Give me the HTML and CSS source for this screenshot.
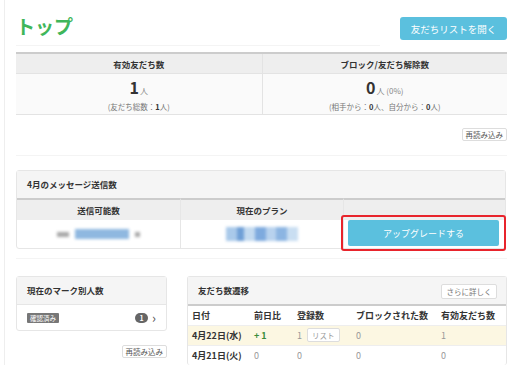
FILE: index.html
```html
<!DOCTYPE html>
<html lang="ja">
<head>
  <meta charset="UTF-8" />
  <title>トップ</title>
  <link rel="stylesheet" href="styles.css">
</head>
<body>
  <div class="page">
    <div class="title-row">
      <h1>トップ</h1>
      <button class="btn-info">友だちリストを開く</button>
    </div>

    <div class="stats">
      <div class="stat">
        <div class="stat-head">有効友だち数</div>
        <div class="stat-body">
          <div class="big"><b>1</b><span class="unit">人</span></div>
          <div class="sub">(友だち総数：<b>1</b>人)</div>
        </div>
      </div>
      <div class="stat">
        <div class="stat-head">ブロック/友だち解除数</div>
        <div class="stat-body">
          <div class="big"><b>0</b><span class="unit">人 (0%)</span></div>
          <div class="sub">(相手から：<b>0</b>人、自分から：<b>0</b>人)</div>
        </div>
      </div>
    </div>

    <div class="reload-row">
      <button class="btn-small">再読み込み</button>
    </div>

    <div class="card msg-card">
      <div class="card-head">4月のメッセージ送信数</div>
      <div class="msg-grid">
        <div class="msg-th">送信可能数</div>
        <div class="msg-th">現在のプラン</div>
        <div class="msg-th"></div>
        <div class="msg-td">
          <span class="blur gray" style="width:12px"></span>
          <span class="blur blue" style="width:54px"></span>
          <span class="blur gray" style="width:5px"></span>
        </div>
        <div class="msg-td">
          <span class="blur blue mosaic" style="width:72px"></span>
        </div>
        <div class="msg-td upgrade-cell">
          <div class="highlight">
            <button class="btn-upgrade">アップグレードする</button>
          </div>
        </div>
      </div>
    </div>
    <div class="divider"></div>

    <div class="bottom">
      <div class="left-col">
        <div class="card">
          <div class="card-head">現在のマーク別人数</div>
          <div class="mark-row">
            <span class="label">確認済み</span>
            <span class="count"><span class="badge">1</span><span class="chev">&rsaquo;</span></span>
          </div>
        </div>
        <div class="reload-row">
          <button class="btn-small">再読み込み</button>
        </div>
      </div>

      <div class="card friends">
        <div class="card-head">
          友だち数遷移
          <button class="btn-small more">さらに詳しく</button>
        </div>
        <table>
          <thead>
            <tr><th>日付</th><th>前日比</th><th>登録数</th><th>ブロックされた数</th><th>有効友だち数</th></tr>
          </thead>
          <tbody>
            <tr class="today">
              <td class="date">4月22日(水)</td>
              <td class="plus">+ 1</td>
              <td>1 <button class="btn-small list">リスト</button></td>
              <td>0</td>
              <td>1</td>
            </tr>
            <tr>
              <td class="date">4月21日(火)</td>
              <td>0</td>
              <td>0</td>
              <td>0</td>
              <td>0</td>
            </tr>
          </tbody>
        </table>
      </div>
    </div>
  </div>
</body>
</html>
```

FILE: styles.css
```css
* {
  box-sizing: border-box;
  margin: 0;
  padding: 0;
}

body {
  background: #ffffff;
  font-family: "Noto Sans CJK JP", "Noto Sans", sans-serif;
  color: #333333;
  font-size: 9px;
  overflow: hidden;
}

.page {
  margin-left: 4px;
  border-left: 1px solid #eeeeee;
  padding: 14px 3px 0 11px;
  min-height: 365px;
}

button {
  font-family: inherit;
  cursor: pointer;
}

.title-row {
  display: flex;
  justify-content: space-between;
  align-items: flex-start;
  height: 32px;
  border-bottom: 1px solid #f4f4f4;
  margin-right: 127px;
  margin-bottom: 6px;
  position: relative;
}

h1 {
  color: #3fb65a;
  font-size: 19px;
  line-height: 24px;
  font-weight: 700;
}

.btn-info {
  position: absolute;
  right: -127px;
  top: 3px;
  width: 107px;
  height: 23px;
  background: #5bc0de;
  color: #ffffff;
  border: none;
  border-radius: 3px;
  font-size: 9.5px;
}

.stats {
  display: grid;
  grid-template-columns: 1fr 1fr;
  border-top: 2px solid #cccccc;
  border-bottom: 1px solid #e3e3e3;
}

.stat + .stat {
  border-left: 1px solid #e3e3e3;
}

.stat-head {
  background: #eeeeee;
  height: 20px;
  line-height: 20px;
  text-align: center;
  font-weight: 700;
  font-size: 8.5px;
  border-bottom: 1px solid #e3e3e3;
}

.stat-body {
  background: #fafafa;
  height: 40px;
  text-align: center;
  padding-top: 5px;
}

.big {
  line-height: 17px;
}

.big b {
  font-size: 16px;
}

.unit {
  font-size: 8px;
  color: #888888;
  margin-left: 1px;
}

.sub {
  font-size: 7.5px;
  color: #777777;
  margin-top: 2px;
}

.sub b {
  color: #333333;
}

.reload-row {
  display: flex;
  justify-content: flex-end;
  padding: 13px 0 14px;
  border-bottom: 1px solid #f4f4f4;
  margin-bottom: 14px;
}

.btn-small {
  background: #ffffff;
  border: 1px solid #dddddd;
  border-radius: 2px;
  font-size: 7.5px;
  color: #555555;
  height: 13px;
  padding: 0 3px;
  line-height: 11px;
}

.card {
  border: 1px solid #e6e6e6;
  border-radius: 3px;
  background: #ffffff;
}

.card-head {
  background: #f5f5f5;
  height: 27px;
  line-height: 27px;
  padding-left: 10px;
  font-weight: 700;
  font-size: 8.5px;
  position: relative;
}

.msg-card {
  margin-right: 1px;
}

.msg-grid {
  display: grid;
  grid-template-columns: 163px 163px 1fr;
}

.msg-th {
  background: #eeeeee;
  border-top: 2px solid #cccccc;
  height: 22px;
  line-height: 20px;
  text-align: center;
  font-weight: 700;
  font-size: 8.5px;
}

.msg-td {
  height: 28px;
  display: flex;
  justify-content: center;
  align-items: center;
  gap: 6px;
}

.msg-th + .msg-th,
.msg-td + .msg-td {
  border-left: 1px solid #e6e6e6;
}

.msg-th:nth-child(4) {
  border-left: none;
}

.blur {
  display: inline-block;
  height: 10px;
  filter: blur(1.5px);
}

.blur.gray {
  background: #a8a8a8;
  height: 5px;
}

.blur.blue {
  background: #8fb8e0;
}

.blur.mosaic {
  height: 14px;
  background: linear-gradient(90deg, #a9c9ea 0 15%, #6f9fd6 15% 25%, #c3daf0 25% 40%, #7eaade 40% 55%, #b8d2ee 55% 70%, #8cb5e2 70% 85%, #c9def2 85%);
}

.upgrade-cell {
  position: relative;
  overflow: visible;
}

.highlight {
  position: absolute;
  left: -3px;
  right: -1px;
  top: -5px;
  bottom: -3px;
  border: 2px solid #e8242c;
  border-radius: 3px;
  padding: 3px 5px 3px 5px;
  display: flex;
}

.btn-upgrade {
  flex: 1;
  background: #5bc0de;
  color: #ffffff;
  border: none;
  border-radius: 2px;
  font-size: 9px;
}

.divider {
  border-bottom: 1px solid #f4f4f4;
  margin-top: 9px;
  margin-bottom: 17px;
}

.bottom {
  display: flex;
  align-items: flex-start;
  gap: 20px;
}

.bottom .reload-row {
  border-bottom: none;
  padding-top: 14px;
}

.left-col {
  width: 151px;
}

.mark-row {
  height: 26px;
  border-top: 1px solid #e6e6e6;
  display: flex;
  justify-content: space-between;
  align-items: center;
  padding: 0 10px;
}

.label {
  background: #777777;
  color: #ffffff;
  font-size: 6.5px;
  padding: 0 3px;
  height: 10px;
  line-height: 10px;
  border-radius: 1px;
}

.count {
  display: flex;
  align-items: center;
  gap: 4px;
}

.badge {
  background: #666666;
  color: #ffffff;
  font-size: 7px;
  font-weight: 700;
  width: 13px;
  height: 10px;
  line-height: 10px;
  border-radius: 5px;
  text-align: center;
}

.chev {
  font-size: 13px;
  color: #555555;
  line-height: 10px;
}

.friends {
  flex: 1;
  border-bottom: none;
}

.more {
  position: absolute;
  right: 9px;
  top: 7px;
  width: 56px;
  height: 15px;
  font-weight: 400;
  color: #777777;
  line-height: 13px;
}

table {
  width: 100%;
  border-collapse: collapse;
  font-size: 9px;
}

thead tr {
  border-top: 2px solid #cccccc;
}

th {
  text-align: left;
  font-weight: 700;
  height: 20px;
  padding-left: 4px;
}

th:nth-child(1) { width: 62px; }
th:nth-child(2) { width: 43px; }
th:nth-child(3) { width: 59px; }
th:nth-child(4) { width: 85px; }

td {
  height: 20px;
  padding-left: 4px;
  color: #999999;
  border-top: 1px solid #eeeeee;
}

td.date {
  color: #333333;
  font-weight: 700;
}

td.plus {
  color: #3a8c3a;
  font-weight: 700;
}

tr.today td {
  background: #fcf7e2;
}

.list {
  margin-left: 3px;
  height: 14px;
  color: #999999;
  padding: 0 4px;
}
```
